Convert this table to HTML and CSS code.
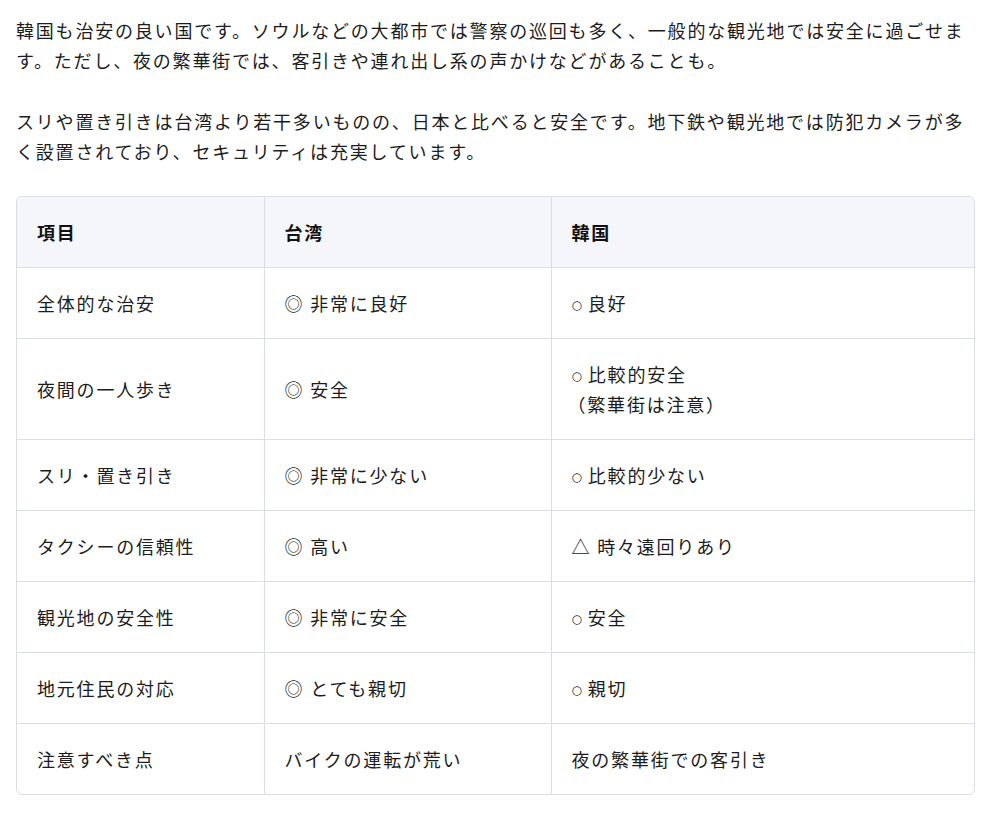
FILE: index.html
```html
<!DOCTYPE html>
<html lang="ja">
<head>
<meta charset="utf-8">
<title>韓国の治安</title>
<link rel="stylesheet" href="styles.css">
</head>
<body>
<main class="article">
  <p class="para">韓国も治安の良い国です。ソウルなどの大都市では警察の巡回も多く、一般的な観光地では安全に過ごせます。ただし、夜の繁華街では、客引きや連れ出し系の声かけなどがあることも。</p>
  <p class="para">スリや置き引きは台湾より若干多いものの、日本と比べると安全です。地下鉄や観光地では防犯カメラが多く設置されており、セキュリティは充実しています。</p>
  <div class="table-wrap">
    <table class="compare">
      <colgroup>
        <col class="c1">
        <col class="c2">
        <col class="c3">
      </colgroup>
      <thead>
        <tr><th>項目</th><th>台湾</th><th>韓国</th></tr>
      </thead>
      <tbody>
        <tr><td>全体的な治安</td><td>◎ 非常に良好</td><td><span class="small-mark">○</span> 良好</td></tr>
        <tr><td>夜間の一人歩き</td><td>◎ 安全</td><td><span class="small-mark">○</span> 比較的安全<br><span class="paren">（繁華街は注意）</span></td></tr>
        <tr><td>スリ・置き引き</td><td>◎ 非常に少ない</td><td><span class="small-mark">○</span> 比較的少ない</td></tr>
        <tr><td>タクシーの信頼性</td><td>◎ 高い</td><td>△ 時々遠回りあり</td></tr>
        <tr><td>観光地の安全性</td><td>◎ 非常に安全</td><td><span class="small-mark">○</span> 安全</td></tr>
        <tr><td>地元住民の対応</td><td>◎ とても親切</td><td><span class="small-mark">○</span> 親切</td></tr>
        <tr><td>注意すべき点</td><td>バイクの運転が荒い</td><td>夜の繁華街での客引き</td></tr>
      </tbody>
    </table>
  </div>
</main>
</body>
</html>
```

FILE: styles.css
```css
html, body {
  margin: 0;
  padding: 0;
  background: #ffffff;
}

body {
  font-family: "Noto Sans CJK JP", "Noto Sans", sans-serif;
  font-size: 18px;
  letter-spacing: 1.8px;
  line-height: 30px;
  color: #1c1c1c;
}

.article {
  width: 959px;
  padding: 15px 0 0 16px;
}

.para {
  margin: 0 0 31px 0;
}

.para + .para {
  margin-bottom: 30px;
}

.table-wrap {
  border: 1px solid #dadee4;
  border-radius: 6px;
  overflow: hidden;
}

.compare {
  width: 100%;
  border-collapse: collapse;
  table-layout: fixed;
}

.c1 { width: 247px; }
.c2 { width: 287px; }
.c3 { width: auto; }

.compare th,
.compare td {
  text-align: left;
  vertical-align: middle;
  padding: 20px 20px;
  border-right: 1px solid #dadee4;
  border-bottom: 1px solid #dadee4;
}

.compare th:last-child,
.compare td:last-child {
  border-right: none;
}

.compare tbody tr:last-child td {
  border-bottom: none;
}

.compare th {
  background: #f5f6fa;
  font-weight: 700;
  color: #111111;
}

.small-mark {
  font-family: "DejaVu Sans", sans-serif;
  font-size: 12px;
  line-height: 1;
  letter-spacing: 0;
  vertical-align: 2px;
}

.paren {
  margin-left: -4px;
}
```
